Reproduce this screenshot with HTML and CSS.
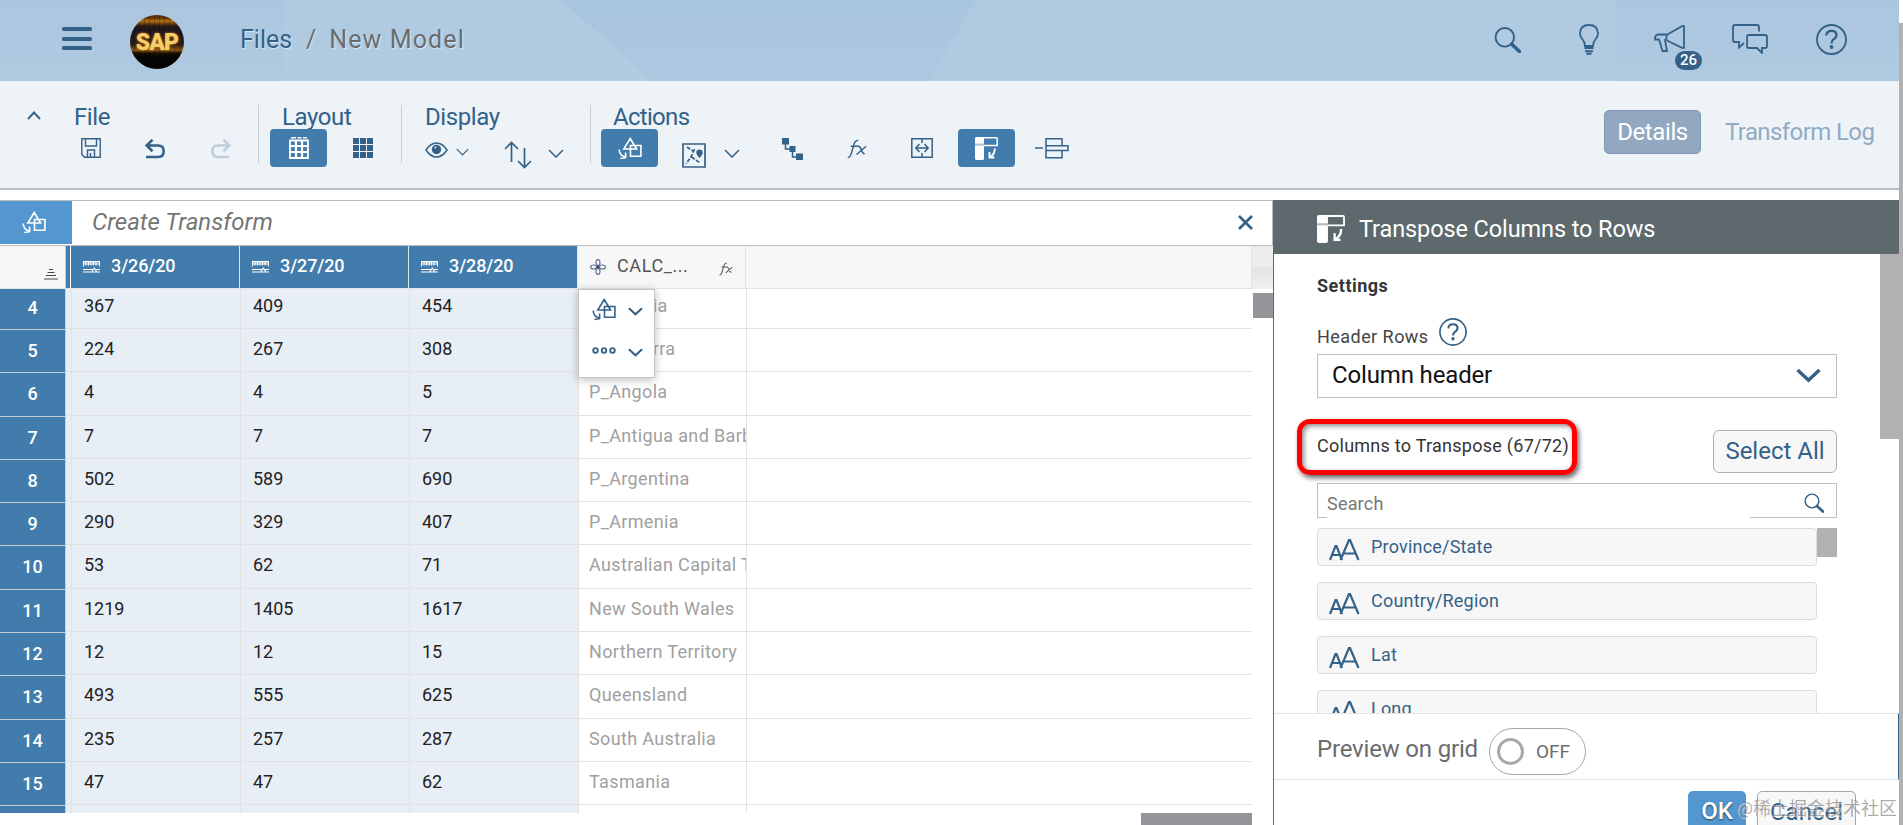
FILE: index.html
```
<!DOCTYPE html>
<html lang="en">
<head>
<meta charset="utf-8">
<title>New Model</title>
<link rel="stylesheet" href="styles.css">
</head>
<body>
<svg class="defs" aria-hidden="true">
  <symbol id="transform" viewBox="0 0 24 23"><path d="M12.2 1.5 18.6 12H5.8ZM12.5 8.5h10.4v10.8H12.5ZM1.2 12.5q.2 5.500 5.600 7.600M7.600 15.400v5.200l-5.200.9" fill="none" stroke="currentColor" stroke-width="1.600"/></symbol>
  <symbol id="transpose" viewBox="0 0 23 23"><path d="M1.500 0H9v6.800H0V1.500Q0 0 1.500 0zM0 8.500h9v13q0 1.500-1.500 1.500h-6Q0 23 0 21.500z" fill="currentColor"/><path d="M0 7.600h9" stroke="currentColor" stroke-width="2" opacity=".55"/><path d="M9 .8h12.200q1 0 1 1V8.500H9" fill="none" stroke="currentColor" stroke-width="1.500"/><path d="M19.800 11.500q.3 5.500-5 8.800M14.500 15v5.500h4.800" fill="none" stroke="currentColor" stroke-width="1.900"/></symbol>
  <symbol id="down" viewBox="0 0 16 9"><path d="m1 1 7 7 7-7" fill="none" stroke="currentColor" stroke-width="1.500"/></symbol>
  <symbol id="downbold" viewBox="0 0 16 9"><path d="m1 1 7 6.500L15 1" fill="none" stroke="currentColor" stroke-width="2.200"/></symbol>
  <symbol id="search" viewBox="0 0 27 26"><circle cx="10.800" cy="10.300" r="9.300" fill="none" stroke="currentColor" stroke-width="1.900"/><path d="m17.500 17 8 7.500" stroke="currentColor" stroke-width="3.600" stroke-linecap="round"/></symbol>
  <symbol id="help" viewBox="0 0 31 31"><circle cx="15.500" cy="15.500" r="14.500" fill="none" stroke="currentColor" stroke-width="1.800"/><path d="M10.300 11.500q.3-4.600 5.200-4.600 5 0 5 4.200 0 2.500-2.800 4.200-2.200 1.400-2.200 4.200" fill="none" stroke="currentColor" stroke-width="2.300"/><circle cx="15.500" cy="23" r="1.900" fill="currentColor"/></symbol>
  <symbol id="measure" viewBox="0 0 17 12"><path d="M0 .500h17M.500.500v5M3 .500v4M5.500.500v4M8 .500v4M10.500.500v4M13 .500v4M16.500.500v5" stroke="currentColor" stroke-width="1"/><path d="M0 0h17v4H0z" fill="currentColor" opacity=".5"/><path d="M0 8.500h9.500M13 8.500h4M0 11h17M9 10.500l2.300-3.500 2.300 3.500" fill="none" stroke="currentColor" stroke-width="1.200"/></symbol>
  <symbol id="fx" viewBox="0 0 22 21"><path d="M.8 20Q3.500 20 4.800 15L8 4.500Q9.200.800 12.500 1M4 7.500h8.500Q14.500 7.500 15.500 11t3.800 5M21 7.500 10.500 16.500" fill="none" stroke="currentColor" stroke-width="1.600"/></symbol>
  <symbol id="dim" viewBox="0 0 31 22"><path d="m1 21 5.500-14h1l5.500 14M3 16h8M11.500 21 20 1h1l8.500 20M15 14.500h11.500" fill="none" stroke="currentColor" stroke-width="2.200"/></symbol>
</svg>

<div class="app">
<header class="shell">
  <div class="burger"><i></i><i></i><i></i></div>
  <div class="avatar"><span>SAP</span></div>
  <div class="crumbs"><a class="files">Files</a><b>/</b><span class="model">New Model</span></div>
  <nav class="tools">
    <svg class="t-search"><use href="#search"/></svg>
    <svg class="t-bulb" viewBox="0 0 20 31"><path d="M6 22Q6 18 3.300 15 1 12.500 1 9.600 1 1 10 1t9 8.600q0 2.900-2.300 5.400Q14 18 14 22z" fill="none" stroke="currentColor" stroke-width="1.800"/><path d="M5.500 24h9M6 27.200h8M7.500 29.800h5" stroke="currentColor" stroke-width="2"/></svg>
    <div class="news"><svg class="t-horn" viewBox="0 0 31 27"><path d="M12.500 10 28 1.200h2v21.600h-2L13 15.500M13 9.500H5Q1 9.500 1 13v1.500h4L8.500 26H13l-2-11 2-.3M12.500 10v5" fill="none" stroke="currentColor" stroke-width="1.800"/></svg><em>26</em></div>
    <svg class="t-chat" viewBox="0 0 36 30"><path d="M27 7.500V3q0-2-2-2H3Q1 1 1 3v13q0 2 2 2h4v5.500l5-4.500M17 11h16q2 0 2 2v9q0 2-2 2h-3v5l-5-5h-8q-2 0-2-2v-9q0-2 2-2z" fill="none" stroke="currentColor" stroke-width="1.800"/></svg>
    <svg class="t-help"><use href="#help"/></svg>
  </nav>
</header>

<section class="toolbar">
  <svg class="collapse" viewBox="0 0 14 9"><path d="m1 8 6-6.500L13 8" fill="none" stroke="currentColor" stroke-width="1.900"/></svg>
  <div class="group g-file">
    <h2 class="l-file">File</h2>
    <div class="btns">
      <svg class="i-save" viewBox="0 0 20 20"><path d="M.8.800h18.400v18.400H3.500L.8 16.500zM4.500 1v7h11V1M6.500 19v-7h7v7M9.500 15v4" fill="none" stroke="currentColor" stroke-width="1.400"/></svg>
      <svg class="i-undo" viewBox="0 0 20 20"><path d="M1.500 6.500H13q5.700 0 5.700 5.700T13 18H1M7.500.800l-6 5.700 6 5.700" fill="none" stroke="currentColor" stroke-width="2.600"/></svg>
      <svg class="i-redo" viewBox="0 0 20 20"><path d="M18.500 6.500H7q-5.700 0-5.700 5.700T7 18h11M12.500.800l6 5.700-6 5.700" fill="none" stroke="currentColor" stroke-width="2.600"/></svg>
    </div>
  </div>
  <div class="group g-layout">
    <h2 class="l-layout">Layout</h2>
    <div class="btns">
      <span class="on"><svg class="i-tab" viewBox="0 0 20 22"><path d="M1 3.500h18V21H1z" fill="none" stroke="currentColor" stroke-width="1.800"/><path d="M1 9h18M1 15h18M7 3v18M13 3v18" stroke="currentColor" stroke-width="2.200"/><path d="M2 .800h5M8.500.800h4M14 .800h4" stroke="currentColor" stroke-width="1.500"/></svg></span>
      <svg class="i-grid" viewBox="0 0 20 20"><path d="M0 0h6v6H0zM7 0h6v6H7zM14 0h6v6h-6zM0 7h6v6H0zM7 7h6v6H7zM14 7h6v6h-6zM0 14h6v6H0zM7 14h6v6H7zM14 14h6v6h-6z" fill="currentColor"/></svg>
    </div>
  </div>
  <div class="group g-display">
    <h2 class="l-display">Display</h2>
    <div class="btns">
      <svg class="i-eye" viewBox="0 0 23 16"><path d="M1 8Q5.500 1 11.500 1T22 8q-4.500 7-10.500 7T1 8z" fill="none" stroke="currentColor" stroke-width="1.500"/><circle cx="11.500" cy="7.500" r="4.700" fill="currentColor"/><path d="M9.800 6.500q.2-1.500 1.700-1.700" stroke="#eef3f8" stroke-width="1.200" fill="none"/></svg>
      <svg class="i-c1"><use href="#down"/></svg>
      <svg class="i-sort" viewBox="0 0 28 28"><path d="M7.500 21V1.500M1 8l6.500-6.500L14 8M20.500 7v19M14 20l6.500 6.500L27 20" fill="none" stroke="currentColor" stroke-width="1.700"/></svg>
      <svg class="i-c2"><use href="#down"/></svg>
    </div>
  </div>
  <div class="group g-actions">
    <h2 class="l-actions">Actions</h2>
    <div class="btns">
      <span class="on"><svg class="i-transform"><use href="#transform"/></svg></span>
      <svg class="i-map" viewBox="0 0 24 25"><path d="M1 1h22v23H1z" fill="none" stroke="currentColor" stroke-width="1.700"/><path d="m5 4 6 4M12.500 6 9.500 13 4 21M9.500 14l8 5.500" fill="none" stroke="currentColor" stroke-width="1.700" stroke-dasharray="4 1.500"/><path d="M17.500 15q-3.200-3.400-3.200-5.300a3.200 3.200 0 0 1 6.400 0q0 1.900-3.200 5.300z" fill="currentColor"/></svg>
      <svg class="i-c3"><use href="#down"/></svg>
      <svg class="i-hier" viewBox="0 0 21 22"><path d="M0 0h7v6.500H0zM7.500 8h6v6h-6zM14 15.500h7V22h-7z" fill="currentColor"/><path d="M3.500 6v5H8M10.500 13v6H15" fill="none" stroke="currentColor" stroke-width="1.500"/></svg>
      <svg class="i-fx"><use href="#fx"/></svg>
      <svg class="i-merge" viewBox="0 0 22 20"><path d="M.8.800h20.400v18.400H.800zM11 1v4M11 15v4M5 10h12M8.500 6 4.800 10l3.700 4M13.500 6l3.700 4-3.700 4" fill="none" stroke="currentColor" stroke-width="1.500"/></svg>
      <span class="on on2"><svg class="i-transpose"><use href="#transpose"/></svg></span>
      <svg class="i-split" viewBox="0 0 34 21"><path d="M0 10h8M11 .800h16v7H11zM11 12.500h16v7.300H11zM11 7.800h22v4.700H11z" fill="none" stroke="currentColor" stroke-width="1.500"/></svg>
    </div>
  </div>
  <div class="tabs"><span class="details">Details</span><span class="log">Transform Log</span></div>
</section>

<main class="work">
  <section class="left">
    <div class="formula">
      <div class="fbtn"><svg><use href="#transform"/></svg></div>
      <span class="ftext">Create Transform</span>
      <svg class="close" viewBox="0 0 15 15"><path d="m1 1 13 13M14 1 1 14" stroke="currentColor" stroke-width="2.600"/></svg>
    </div>
    <div class="grid">
      <div class="rownums">
        <div class="corner"><svg viewBox="0 0 14 11"><path d="M5 .500h4M3.500 3.500h7M2 6.500h10M0 10h14" stroke="#444" stroke-width="1"/></svg></div>
        <div class="num first">4</div><div class="num">5</div><div class="num">6</div><div class="num">7</div><div class="num">8</div><div class="num">9</div><div class="num">10</div><div class="num">11</div><div class="num">12</div><div class="num">13</div><div class="num">14</div><div class="num">15</div><div class="num"></div>
      </div>
      <div class="cells">
        <div class="hrow"><i></i>
          <div class="h"><svg><use href="#measure"/></svg>3/26/20</div>
          <div class="h"><svg><use href="#measure"/></svg>3/27/20</div>
          <div class="h"><svg><use href="#measure"/></svg>3/28/20</div>
          <div class="h calc"><svg class="flower" viewBox="0 0 16 16"><g fill="none" stroke="#5b6b93" stroke-width="1.100"><ellipse cx="8" cy="3.600" rx="2" ry="3"/><ellipse cx="8" cy="12.400" rx="2" ry="3"/><ellipse cx="3.600" cy="8" rx="3" ry="2"/><ellipse cx="12.400" cy="8" rx="3" ry="2"/></g><circle cx="8" cy="8" r="1.300" fill="#444"/></svg>CALC_...<svg class="cfx"><use href="#fx"/></svg></div>
          <div class="rest"></div>
        </div>
        <div class="row first"><i></i><span>367</span><span>409</span><span>454</span><span class="c">P_Algeria</span></div>
        <div class="row"><i></i><span>224</span><span>267</span><span>308</span><span class="c">P_Andorra</span></div>
        <div class="row"><i></i><span>4</span><span>4</span><span>5</span><span class="c">P_Angola</span></div>
        <div class="row"><i></i><span>7</span><span>7</span><span>7</span><span class="c">P_Antigua and Barbuda</span></div>
        <div class="row"><i></i><span>502</span><span>589</span><span>690</span><span class="c">P_Argentina</span></div>
        <div class="row"><i></i><span>290</span><span>329</span><span>407</span><span class="c">P_Armenia</span></div>
        <div class="row"><i></i><span>53</span><span>62</span><span>71</span><span class="c">Australian Capital Territory</span></div>
        <div class="row"><i></i><span>1219</span><span>1405</span><span>1617</span><span class="c">New South Wales</span></div>
        <div class="row"><i></i><span>12</span><span>12</span><span>15</span><span class="c">Northern Territory</span></div>
        <div class="row"><i></i><span>493</span><span>555</span><span>625</span><span class="c">Queensland</span></div>
        <div class="row"><i></i><span>235</span><span>257</span><span>287</span><span class="c">South Australia</span></div>
        <div class="row"><i></i><span>47</span><span>47</span><span>62</span><span class="c">Tasmania</span></div>
        <div class="row"><i></i><span></span><span></span><span></span><span class="c"></span></div>
      </div>
      <div class="vscroll"><div class="vhead"></div><div class="vthumb"></div></div>
      <div class="popup">
        <div class="prow"><svg class="p-tr"><use href="#transform"/></svg><svg class="p-ch"><use href="#downbold"/></svg></div>
        <div class="prow"><svg class="p-dots" viewBox="0 0 24 7"><g fill="none" stroke="currentColor" stroke-width="1.800"><circle cx="3.500" cy="3.500" r="2.300"/><circle cx="12" cy="3.500" r="2.300"/><circle cx="20.500" cy="3.500" r="2.300"/></g></svg><svg class="p-ch"><use href="#downbold"/></svg></div>
      </div>
    </div>
    <div class="hscroll"><div></div></div>
  </section>

  <aside class="panel">
    <div class="phead"><svg><use href="#transpose"/></svg><span>Transpose Columns to Rows</span></div>
    <div class="pbody">
      <div class="settings">
        <h3>Settings</h3>
        <div class="hr"><span>Header Rows</span><svg><use href="#help"/></svg></div>
        <div class="select"><span>Column header</span><svg><use href="#downbold"/></svg></div>
        <div class="trow"><span class="mark"><span>Columns to Transpose (67/72)</span></span><span class="selall"><span>Select All</span></span></div>
        <div class="sbox"><span>Search</span><svg><use href="#search"/></svg></div>
        <div class="list">
          <div class="items">
            <div class="item"><svg><use href="#dim"/></svg><span>Province/State</span></div>
            <div class="item"><svg><use href="#dim"/></svg><span>Country/Region</span></div>
            <div class="item"><svg><use href="#dim"/></svg><span>Lat</span></div>
            <div class="item"><svg><use href="#dim"/></svg><span>Long</span></div>
          </div>
          <div class="lthumb"></div>
        </div>
      </div>
      <div class="pthumb"></div>
    </div>
    <div class="preview"><span>Preview on grid</span><div class="toggle"><i></i><b>OFF</b></div></div>
    <div class="pfoot"><span class="ok"><span>OK</span></span><span class="cancel"><span>Cancel</span></span><div class="wm">@稀土掘金技术社区</div></div>
  </aside>
</main>
</div>
<div class="pagescroll"></div>
</body>
</html>
```
FILE: styles.css
```
* { box-sizing: border-box; }
body { margin: 0; width: 1903px; height: 825px; overflow: hidden; display: flex; background: #fff; font-family: Roboto, "Liberation Sans", sans-serif; color: #346187; }
svg { display: block; flex: none; color: inherit; }
.defs { position: absolute; width: 0; height: 0; }
h2, h3 { margin: 0; font-weight: 400; }
.app { width: 1899px; height: 825px; flex: none; display: flex; flex-direction: column; }
.pagescroll { width: 4px; margin-top: 23px; background: #b1b1b1; }

.shell { position: relative; height: 81px; flex: none; display: flex; align-items: flex-start; background: linear-gradient(#a9c6de00, #b4cee466), linear-gradient(90deg, #abc6de 0 283px, #afc9e0 283px 1616px, #abc6de 1616px); }
.shell::before { content: ""; position: absolute; left: 561px; top: 0; width: 414px; height: 81px; background: linear-gradient(#a8c5de, #adc7df); clip-path: polygon(0 0, 100% 0, 369px 100%, 91px 100%); }
.burger { margin: 27px 0 0 62px; width: 30px; display: flex; flex-direction: column; gap: 5.500px; }
.burger i { height: 4px; border-radius: 1.500px; background: #346187; }
.avatar { margin: 15px 0 0 38px; width: 54px; height: 54px; border-radius: 50%; overflow: hidden; text-align: center; background: repeating-linear-gradient(90deg, #0000 0 4px, #0003 4px 5px), linear-gradient(#5b3507 0 3px, #b8720f 6px, #7c4a10 8px, #2a1a14 11px, #1d1522 16px, #2b1d12 30px, #8c5a18 35px, #1a1004 38px, #050402 42px); }
.avatar span { display: block; margin-top: 15px; font: 900 23px/25px Roboto, sans-serif; letter-spacing: -.900px; color: #f6cd68; text-shadow: 0 0 3px #d47f13; }
.crumbs { margin: 23px 0 0 56px; display: flex; font-size: 25px; line-height: 34px; text-shadow: 1px 1px 1px #dbe8f3; }
.crumbs b { font-weight: 400; color: #6a6d70; margin: 0 13px 0 13px; }
.files { width: 53px; }
.model { color: #6a6d70; letter-spacing: 1.100px; }
.tools { margin-left: auto; width: 405px; height: 81px; display: flex; padding-top: 24px; }
.t-search { width: 27px; height: 26px; margin-top: 3px; }
.t-bulb { width: 20px; height: 31px; margin-left: 58px; }
.news { position: relative; margin-left: 55px; width: 31px; padding-top: 1px; }
.t-horn { width: 31px; height: 27px; }
.news em { position: absolute; left: 21px; top: 27px; width: 27px; height: 19px; border-radius: 10px; background: #346187; color: #fff; font: 500 15px/19px Roboto, sans-serif; text-align: center; }
.t-chat { width: 36px; height: 30px; margin-left: 47px; }
.t-help { width: 31px; height: 31px; margin-left: 48px; }

.toolbar { height: 109px; flex: none; display: flex; background: #eef3f8; border-bottom: 2px solid #bbbdbf; }
.collapse { width: 14px; height: 9px; margin: 30px 0 0 27px; }
.group { position: relative; height: 58px; margin-top: 24px; }
.group + .group { border-left: 1px solid #c8cdd2; }
.g-file { width: 217px; margin-left: 0; }
.g-layout { width: 143px; }
.g-display { width: 189px; }
.g-actions { width: 500px; }
.group h2 { font-size: 24px; line-height: 24px; height: 24px; white-space: nowrap; letter-spacing: -.400px; }
.l-file { padding-left: 33px; } .l-layout { padding-left: 23px; } .l-display { padding-left: 23px; } .l-actions { padding-left: 22px; }
.group .l-actions { letter-spacing: -.700px; }
.btns { display: flex; align-items: center; height: 38px; }
.g-file .btns { padding-left: 40px; }
.i-save { width: 20px; height: 20px; } .i-undo { width: 20px; height: 20px; margin: 2px 0 0 44px; } .i-redo { width: 20px; height: 20px; margin: 2px 0 0 46px; opacity: .25; }
.on { width: 57px; height: 38px; flex: none; border-radius: 4px; background: #427cac; color: #fff; display: flex; align-items: center; justify-content: center; }
.g-layout .on { margin-left: 11px; }
.i-tab { width: 20px; height: 22px; } .i-grid { width: 20px; height: 20px; margin-left: 26px; }
.i-eye { width: 23px; height: 16px; margin: 4px 0 0 23px; } .i-c1 { width: 13px; height: 8px; margin: 8px 0 0 8px; }
.i-sort { width: 28px; height: 28px; margin: 14px 0 0 35px; } .i-c2 { width: 16px; height: 9px; margin: 10px 0 0 16px; }
.g-actions .on { margin-left: 10px; }
.i-transform { width: 24px; height: 23px; }
.i-map { width: 24px; height: 25px; margin: 14px 0 0 24px; } .i-c3 { width: 16px; height: 9px; margin: 10px 0 0 18px; }
.i-hier { width: 21px; height: 22px; margin: 1px 0 0 42px; } .i-fx { width: 20px; height: 20px; margin: 1px 0 0 44px; } .i-merge { width: 22px; height: 20px; margin-left: 44px; }
.g-actions .on2 { margin-left: 25px; }
.i-transpose { width: 23px; height: 23px; } .i-split { width: 34px; height: 21px; margin-left: 20px; }
.tabs { margin: 29px 25px 0 auto; display: flex; height: 44px; font-size: 24px; line-height: 43px; }
.details { width: 97px; border: 1px solid #8299b5; border-radius: 5px; background: #91a8c0; color: #fff; text-align: center; letter-spacing: -.400px; }
.log { width: 148px; margin-left: 24px; color: #90abc3; white-space: nowrap; letter-spacing: -.600px; line-height: 44px; margin-right: 1px; }

.work { display: flex; height: 635px; padding-top: 10px; }
.left { width: 1273px; flex: none; display: flex; flex-direction: column; }
.formula { height: 46px; flex: none; border: 1px solid #bbbdbf; border-left: 0; display: flex; }
.fbtn { width: 72px; height: 43px; background: #5496cf; color: #fff; padding: 10px 0 0 22px; }
.fbtn svg { width: 24px; height: 23px; }
.ftext { margin-left: 20px; font-size: 24px; font-style: italic; line-height: 42px; color: #757575; }
.close { width: 15px; height: 15px; margin: 14px 19px 0 auto; }
.grid { position: relative; height: 567px; display: flex; overflow: hidden; }
.rownums { width: 66px; flex: none; border-right: 1px solid #c9ced3; }
.corner { height: 43px; background: #f7f7f7; border-bottom: 1px solid #e5e5e5; padding: 23px 0 0 44px; }
.corner svg { width: 14px; height: 11px; }
.num { height: 43.290px; background: #427cac; border-bottom: 1px solid #c9ced3; color: #fff; font-weight: 500; font-size: 18px; line-height: 41px; text-align: center; }
.num.first { height: 41px; line-height: 38px; }
.cells { width: 1186px; flex: none; font-size: 18px; }
.hrow { display: flex; height: 43px; border-bottom: 1px solid #e5e5e5; }
.hrow > i { width: 5px; background: #427cac; border-right: 1px solid #fff; }
.h { width: 169px; display: flex; border-right: 1px solid #e5e5e5; background: #427cac; color: #fff; font-size: 18px; line-height: 39px; font-weight: 500; padding-left: 12px; white-space: nowrap; letter-spacing: -.1px; }
.h svg { width: 17px; height: 12px; margin: 15px 11px 0 0; }
.h.calc { width: 168px; background: #f7f7f7; color: #555; font-weight: 400; padding-left: 12px; letter-spacing: .600px; }
.h .flower { width: 16px; height: 16px; margin: 13px 11px 0 0; }
.h .cfx { width: 14px; height: 14px; margin: 16px 12px 0 auto; color: #555; }
.rest { flex: 1; background: #f7f7f7; border-right: 1px solid #e5e5e5; }
.row { display: flex; height: 43.290px; border-bottom: 1px solid #e2e2e2; line-height: 40px; color: #222; }
.row.first { height: 40px; line-height: 34px; }
.row i { width: 6px; background: #e8eef6; border-right: 1px solid #e2e2e2; }
.row span { width: 169px; flex: none; background: #e8eef6; border-right: 1px solid #e2e2e2; padding-left: 12px; white-space: nowrap; overflow: hidden; }
.row .c { width: 168px; padding-left: 10px; background: #fff; color: #a0a0a0; letter-spacing: .350px; }
.vscroll { width: 21px; }
.vhead { height: 43px; background: linear-gradient(#ededed 0 50%, #e4e4e4 50%, #f0f0f0); }
.vthumb { height: 25px; margin: 4px 0 0 1px; background: #939598; }
.popup { position: absolute; left: 578px; top: 43px; width: 77px; height: 89px; padding: 8px 11px 0 13px; background: #fff; border: 1px solid #c5c5c5; box-shadow: 0 2px 9px #0004; }
.prow { display: flex; height: 41px; justify-content: space-between; }
.p-tr { width: 24px; height: 23px; } .p-dots { width: 24px; height: 7px; margin-top: 8px; }
.p-ch { width: 15px; height: 9px; margin-top: 9px; }
.hscroll { height: 12px; padding-left: 1141px; }
.hscroll div { width: 111px; height: 12px; background: #939598; }

.panel { width: 626px; flex: none; display: flex; flex-direction: column; border-left: 1px solid #5e696e; overflow: hidden; }
.phead { height: 54px; flex: none; display: flex; background: #5e696e; color: #fff; padding-left: 43px; font-size: 23.500px; line-height: 58px; letter-spacing: -.100px; }
.phead svg { width: 28px; height: 28px; margin: 15px 14px 0 0; }
.pbody { height: 459px; flex: none; display: flex; overflow: hidden; }
.settings { width: 606px; padding: 20px 43px 0; flex: none; font-size: 18px; }
.pthumb { width: 19px; height: 185px; background: #b1b1b1; }
h3 { font-size: 18px; line-height: 24px; font-weight: 700; color: #32363a; letter-spacing: .5px; }
.hr { display: flex; height: 28px; margin-top: 20px; color: #444; line-height: 38px; letter-spacing: .450px; }
.hr span { width: 122px; }
.hr svg { width: 28px; height: 28px; color: #346187; }
.select { height: 44px; width: 520px; margin-top: 8px; border: 1px solid #bfbfbf; display: flex; justify-content: space-between; padding: 0 15px 0 14px; font-size: 24px; line-height: 40px; color: #111; letter-spacing: -.150px; }
.select svg { width: 25px; height: 15px; margin-top: 13px; color: #346187; }
.trow { height: 56px; width: 520px; margin-top: 21px; display: flex; justify-content: space-between; }
.mark { width: 280px; height: 56px; margin-left: -20px; border: 5px solid #fe0000; border-radius: 13px; padding-left: 15px; line-height: 44px; color: #333; white-space: nowrap; letter-spacing: .260px; box-shadow: 2px 3px 5px #0009, inset 2px 2px 5px #0007; }
.selall { width: 124px; height: 43px; margin-top: 11px; border: 1px solid #b0b0b0; border-radius: 6px; background: #f7f7f7; text-align: center; font-size: 24px; line-height: 41px; }
.sbox { height: 35px; width: 520px; margin-top: 8px; border: 1px solid #bfbfbf; border-bottom: 0; padding: 0 12px 0 9px; display: flex; justify-content: space-between; line-height: 40px; color: #777; letter-spacing: .200px; background: linear-gradient(90deg, #bfbfbf 9px, #fff 9px 432px, #bfbfbf 432px) bottom / 100% 1px no-repeat; }
.sbox svg { width: 20px; height: 20px; margin-top: 9px; color: #346187; }
.list { width: 520px; margin-top: 10px; display: flex; }
.items { width: 500px; display: flex; flex-direction: column; gap: 16px; }
.item { height: 38px; border: 1px solid #dcdcdc; border-radius: 4px; background: #f7f7f7; display: flex; padding-left: 11px; line-height: 36px; letter-spacing: .200px; }
.item svg { width: 31px; height: 22px; margin: 10px 11px 0 0; }
.lthumb { width: 20px; height: 29px; background: #b1b1b1; }
.preview { height: 67px; flex: none; border-top: 1px solid #e5e5e5; border-bottom: 1px solid #e5e5e5; border-right: 1px solid #346187; display: flex; padding: 14px 0 0 43px; font-size: 24px; color: #6a6d70; }
.preview > span { width: 172px; line-height: 42px; white-space: nowrap; letter-spacing: -.180px; }
.toggle { width: 97px; height: 47px; border: 1px solid #a5a5a5; border-radius: 24px; display: flex; padding: 9px 0 0 7px; }
.toggle i { width: 27px; height: 27px; border: 3px solid #a9a9a9; border-radius: 50%; }
.toggle b { margin-left: 12px; font-weight: 400; font-size: 19px; line-height: 27px; }
.pfoot { position: relative; display: flex; height: 45px; padding: 11px 0 0 414px; font-size: 24px; flex: none; }
.ok, .cancel { height: 44px; border-radius: 5px; text-align: center; line-height: 41px; }
.ok { width: 58px; background: #5496cf; color: #fff; font-weight: 500; text-shadow: 0 1px 2px #245; }
.cancel { width: 99px; margin-left: 11px; border: 1px solid #a5a5a5; background: #f7f7f7; }
.wm { position: absolute; left: 462px; top: 15px; font: 18px/24px "Noto Sans CJK SC", sans-serif; color: #8c8c8cbb; text-shadow: 1px 1px 0 #fff8; white-space: nowrap; }
```
